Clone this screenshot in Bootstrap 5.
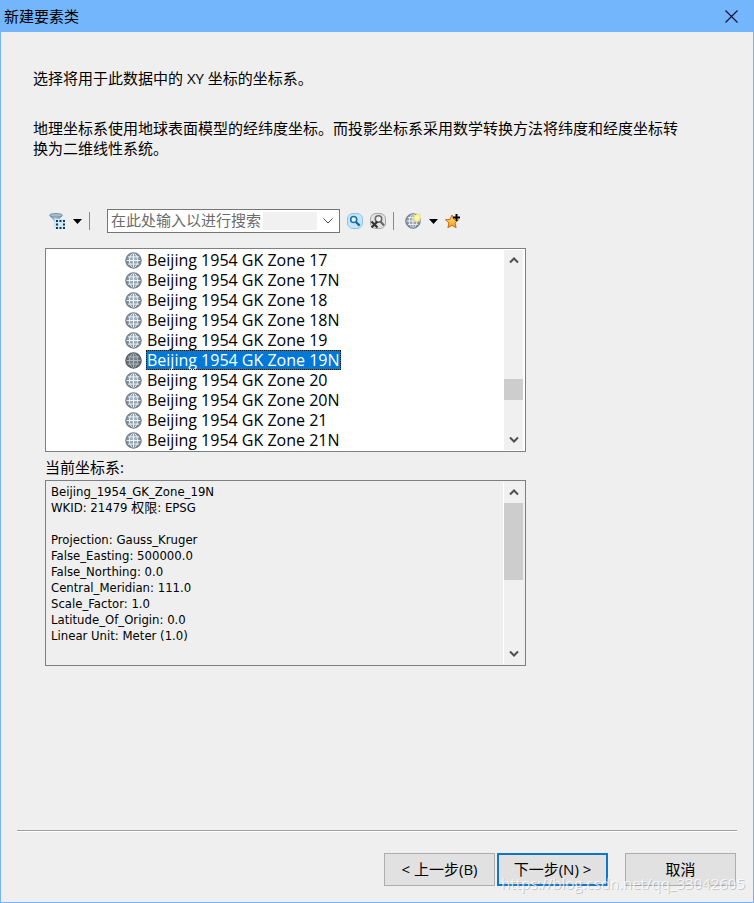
<!DOCTYPE html>
<html lang="zh-CN">
<head>
<meta charset="utf-8">
<meta name="viewport" content="width=device-width, initial-scale=1">
<title>新建要素类</title>
<link href="https://cdn.jsdelivr.net/npm/bootstrap@5.3.0/dist/css/bootstrap.min.css" rel="stylesheet">
<style>
body{font-family:"Open Sans","Noto Sans CJK SC",sans-serif;font-size:15px;line-height:20px;color:#000;background:#efefef}
.dialog{border:1px solid #74b4f8;border-top:0;background:#efefef}
.titlebar{background:#74b6fc;height:32px;padding-left:3px}
.titlebar h1{font-size:15px;line-height:20px;font-weight:400}
.icon-btn{border:0;background:none;padding:0;color:#000;display:inline-flex;align-items:center;justify-content:center}
.close-btn{width:43px;height:32px}
.content{padding:36px 0 0 32px}
.content p{margin-bottom:30px;max-width:650px}
.picker{width:64%;margin-left:44px}
.toolbar{margin-top:20px;height:26px;padding-left:4px;gap:7px}
.sep{width:1px;height:18px;background:#8a8a8a}
.search{width:233px;height:24px;border:1px solid #767676;background:#fff;margin-left:10px}
.search input{border:0;min-width:0;outline:0;padding:0 0 3px 3px;font-size:15px;line-height:20px;color:#555;background:linear-gradient(#f1f1f1,#f1f1f1) right center/54px 18px no-repeat #fff}
.search input::placeholder{color:#6b6b6b;opacity:1}
.search button{width:22px}
.frame{border:1px solid #7d7f83;padding:1px}
.tree{margin-top:14px;background:#fff}
.tree-items{padding-left:78px}
.tree-items button{border:0;background:none;padding:0;height:20px;gap:4px;font-size:16px;line-height:20px;text-align:left;color:#000}
.tree-items button span{padding:0 1px;white-space:nowrap}
.tree-items .picked span{background:#0078d7;color:#fff;outline:1px dotted #2a1500;outline-offset:-1px}
.picked svg{filter:brightness(.75)}
.scroll{width:19px;background:#f0f0f0;margin-right:1px}
.scroll button{height:21px;width:19px}
.thumb{background:#cdcdcd}
.tree .lead-space{flex:108}.tree .thumb{flex:21}.tree .tail-space{flex:29}
.info .thumb{flex:77}.info .tail-space{flex:63}
.caption{margin:5px 0 3px;line-height:20px;font-size:15px}
.info .scroll{border-left:1px solid #fff;width:20px}
.info pre{font-family:"DejaVu Sans Condensed","Noto Sans CJK SC",sans-serif;font-size:13px;line-height:16px;margin:0;padding:2px 4px 20px;overflow:visible;color:#000}
.actions{margin:0 16px;border-top:1px solid #a0a0a0;box-shadow:inset 0 1px #fff;padding:22px 1px 16px 0}
.dlg-btn{width:111px;height:33px;border:1px solid #adadad;border-radius:0;background:#e1e1e1;padding:0 0 2px;font-size:15px;line-height:20px;color:#000}
.dlg-btn.main{border:2px solid #0f76c8;margin-left:2px}
.dlg-btn.last{margin-left:17px}
.stamp{right:8px;bottom:9px;font:15px/20px "Open Sans",sans-serif;color:rgba(255,255,255,.75);text-shadow:1px 1px rgba(150,150,150,.45);pointer-events:none}
</style>
<script src="https://cdn.jsdelivr.net/npm/bootstrap@5.3.0/dist/js/bootstrap.bundle.min.js"></script>
</head>
<body>
<svg class="position-absolute" width="0" height="0" aria-hidden="true">
  <defs>
    <radialGradient id="gl" cx=".5" cy=".45" r=".6"><stop offset="0" stop-color="#b3bfca"/><stop offset=".6" stop-color="#8795a3"/><stop offset="1" stop-color="#66727f"/></radialGradient>
    <linearGradient id="fun" x1="0" x2="1"><stop offset="0" stop-color="#5d7d97"/><stop offset=".45" stop-color="#b9d9ec"/><stop offset="1" stop-color="#6f93ae"/></linearGradient>
    <linearGradient id="star" x1="0" y1="0" x2="0" y2="1"><stop offset="0" stop-color="#ffe27a"/><stop offset="1" stop-color="#f5a01c"/></linearGradient>
    <symbol id="globe" viewBox="0 0 16 16"><circle cx="8" cy="8" r="7.300" fill="url(#gl)" stroke="#7b848d"/><path d="M8 1.500v13M1.500 8h13M2.800 4.600h10.400M2.800 11.400h10.400M7 1.500C3.200 4.500 3.200 11.500 7 14.500M9 1.500c3.800 3 3.800 10 0 13" fill="none" stroke="#f2f6f9" stroke-width=".9"/></symbol>
    <symbol id="up" viewBox="0 0 10 7"><path d="M1 5.500 5 1.500l4 4" fill="none" stroke="#505050" stroke-width="2"/></symbol>
    <symbol id="down" viewBox="0 0 10 7"><path d="M1 1.500l4 4 4-4" fill="none" stroke="#505050" stroke-width="2"/></symbol>
    <symbol id="caret" viewBox="0 0 9 5"><path d="M0 0h9L4.500 5z"/></symbol>
  </defs>
</svg>
<main class="dialog d-flex flex-column min-vh-100 position-relative">
  <header class="titlebar d-flex align-items-center justify-content-between">
    <h1 class="m-0">新建要素类</h1>
    <button class="icon-btn close-btn" type="button" aria-label="关闭"><svg width="13" height="13" viewBox="0 0 13 13"><path d="M.5.5l12 12M12.500.5l-12 12" stroke="#10103a" stroke-width="1.200"/></svg></button>
  </header>
  <section class="content">
    <p>选择将用于此数据中的 XY 坐标的坐标系。</p>
    <p>地理坐标系使用地球表面模型的经纬度坐标。而投影坐标系采用数学转换方法将纬度和经度坐标转换为二维线性系统。</p>
  </section>
  <section class="picker">
    <div class="toolbar d-flex align-items-center">
      <button class="icon-btn gap-2" type="button" aria-label="筛选">
        <svg width="16" height="16" viewBox="0 0 16 16"><path d="M.5 2.500 5.500 8.500v5.500l3 1.500V8.500l5-6z" fill="url(#fun)"/><ellipse cx="7" cy="2.300" rx="6.500" ry="1.800" fill="#a8bccb" stroke="#6c8799" stroke-width=".8"/><path d="M6 6h10v10H6z" fill="#d3e8f5"/><path d="M7 7h2v2H7zM10.500 7h2v2h-2zM14 7h2v2h-2zM7 10.500h2v2H7zM14 10.500h2v2h-2zM7 14h2v2H7zM10.500 14h2v2h-2zM14 14h2v2h-2z" fill="#0b3a5c"/></svg>
        <svg width="9" height="5"><use href="#caret"/></svg>
      </button>
      <span class="sep"></span>
      <div class="search d-flex align-items-stretch">
        <input class="flex-grow-1" type="text" placeholder="在此处输入以进行搜索" aria-label="搜索坐标系">
        <button class="icon-btn" type="button" aria-label="搜索记录"><svg width="10" height="6" viewBox="0 0 10 6"><path d="M.5.500 5 5 9.500.500" fill="none" stroke="#444"/></svg></button>
      </div>
      <button class="icon-btn" type="button" aria-label="搜索"><svg width="16" height="16" viewBox="0 0 16 16"><rect x=".5" y=".5" width="15" height="15" rx="5.500" fill="#c5e5f8" stroke="#8fc3e4"/><circle cx="6.700" cy="6.500" r="3" fill="#e9f7ff" stroke="#1b71ac" stroke-width="1.600"/><path d="M9 9l3.600 3.600" stroke="#17649b" stroke-width="2.200"/></svg></button>
      <button class="icon-btn" type="button" aria-label="清除搜索"><svg width="16" height="16" viewBox="0 0 16 16"><rect x=".5" y=".5" width="15" height="15" rx="5.500" fill="#e3e3e3" stroke="#a5a5a5"/><circle cx="8.500" cy="6" r="3.200" fill="#f2f2f2" stroke="#666" stroke-width="1.500"/><path d="M10.500 8.500l3.500 4" stroke="#666" stroke-width="2"/><path d="M1.500 8.500l6 6M7.500 8.500l-6 6" stroke="#333" stroke-width="2.200"/></svg></button>
      <span class="sep"></span>
      <button class="icon-btn gap-2 ms-1" type="button" aria-label="添加坐标系">
        <svg width="16" height="16" viewBox="0 0 16 16"><use href="#globe" width="16" height="16"/><path d="M12 0l1 2.200L15.500 1.500l-1 2.500 1.500 1-1.500 1 1 2.500L13 7.500 12 10l-1-2.500-2.500 1 1-2.500L8 5l1.500-1-1-2.500 2.500.700z" fill="#fff6a0" stroke="#d9c65a" stroke-width=".4"/></svg>
        <svg width="9" height="5"><use href="#caret"/></svg>
      </button>
      <button class="icon-btn" type="button" aria-label="添加到收藏夹"><svg width="16" height="16" viewBox="0 0 16 16"><path d="M7 2l1.900 4.300 4.700.5-3.500 3.100 1 4.800L7 12.300l-4.100 2.400 1-4.800L.5 6.800l4.600-.5z" fill="url(#star)" stroke="#c46a10"/><path d="M11.500 2v5M9 4.500h5" stroke="#fff" stroke-width="3"/><path d="M11.500 1v7M8 4.500h7" stroke="#000" stroke-width="2"/></svg></button>
    </div>
    <div class="tree frame d-flex">
      <div class="tree-items flex-grow-1 d-flex flex-column">
        <button class="d-flex align-items-center" type="button"><svg width="17" height="17"><use href="#globe"/></svg><span>Beijing 1954 GK Zone 17</span></button>
        <button class="d-flex align-items-center" type="button"><svg width="17" height="17"><use href="#globe"/></svg><span>Beijing 1954 GK Zone 17N</span></button>
        <button class="d-flex align-items-center" type="button"><svg width="17" height="17"><use href="#globe"/></svg><span>Beijing 1954 GK Zone 18</span></button>
        <button class="d-flex align-items-center" type="button"><svg width="17" height="17"><use href="#globe"/></svg><span>Beijing 1954 GK Zone 18N</span></button>
        <button class="d-flex align-items-center" type="button"><svg width="17" height="17"><use href="#globe"/></svg><span>Beijing 1954 GK Zone 19</span></button>
        <button class="picked d-flex align-items-center" type="button" aria-pressed="true"><svg width="17" height="17"><use href="#globe"/></svg><span>Beijing 1954 GK Zone 19N</span></button>
        <button class="d-flex align-items-center" type="button"><svg width="17" height="17"><use href="#globe"/></svg><span>Beijing 1954 GK Zone 20</span></button>
        <button class="d-flex align-items-center" type="button"><svg width="17" height="17"><use href="#globe"/></svg><span>Beijing 1954 GK Zone 20N</span></button>
        <button class="d-flex align-items-center" type="button"><svg width="17" height="17"><use href="#globe"/></svg><span>Beijing 1954 GK Zone 21</span></button>
        <button class="d-flex align-items-center" type="button"><svg width="17" height="17"><use href="#globe"/></svg><span>Beijing 1954 GK Zone 21N</span></button>
      </div>
      <div class="scroll d-flex flex-column flex-shrink-0">
        <button class="icon-btn" type="button" aria-label="向上滚动"><svg width="10" height="7"><use href="#up"/></svg></button>
        <div class="lead-space"></div><div class="thumb"></div><div class="tail-space"></div>
        <button class="icon-btn" type="button" aria-label="向下滚动"><svg width="10" height="7"><use href="#down"/></svg></button>
      </div>
    </div>
    <h2 class="caption fw-normal">当前坐标系:</h2>
    <div class="info frame d-flex">
      <pre class="flex-grow-1">Beijing_1954_GK_Zone_19N
WKID: 21479 权限: EPSG

Projection: Gauss_Kruger
False_Easting: 500000.0
False_Northing: 0.0
Central_Meridian: 111.0
Scale_Factor: 1.0
Latitude_Of_Origin: 0.0
Linear Unit: Meter (1.0)</pre>
      <div class="scroll d-flex flex-column flex-shrink-0">
        <button class="icon-btn" type="button" aria-label="向上滚动"><svg width="10" height="7"><use href="#up"/></svg></button>
        <div class="thumb"></div><div class="tail-space"></div>
        <button class="icon-btn" type="button" aria-label="向下滚动"><svg width="10" height="7"><use href="#down"/></svg></button>
      </div>
    </div>
  </section>
  <footer class="actions mt-auto d-flex justify-content-end">
    <button class="dlg-btn" type="button">&lt; 上一步(B)</button>
    <button class="dlg-btn main" type="button">下一步(N) &gt;</button>
    <button class="dlg-btn last" type="button">取消</button>
  </footer>
  <div class="stamp position-absolute">https://blog.csdn.net/qq_33042605</div>
</main>
</body>
</html>
